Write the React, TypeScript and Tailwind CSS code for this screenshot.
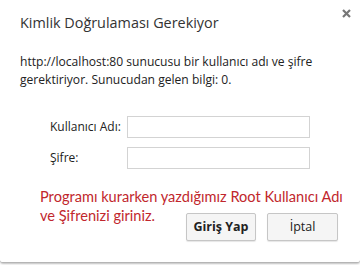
import React from 'react';

const font = { fontFamily: '"Open Sans", "Noto Sans", sans-serif' };
const noteFont = { fontFamily: 'Lato, "Open Sans", sans-serif' };

export default function App() {
  return (
    <div className="w-[360px] h-[265px] bg-white overflow-hidden" style={font}>
      <div className="h-[263px] bg-white border-b border-[#b5b5b5] rounded-b-[3px] shadow-[0_1px_2px_rgba(0,0,0,0.25)] flex flex-col text-[#222]">
        {/* --- HEADER --- */}
        <div className="flex items-start justify-between pl-5 pr-[7px] pt-[12px]">
          <h1 className="text-[14.4px] leading-[22px] text-[#333]">Kimlik Doğrulaması Gerekiyor</h1>
          <button className="mt-[-6px] w-[14px] h-[14px] flex items-center justify-center text-[#777]">
            <svg width="9" height="9" viewBox="0 0 9 9">
              <path d="M1 1 L8 8 M8 1 L1 8" stroke="currentColor" strokeWidth="2.2" strokeLinecap="butt" />
            </svg>
          </button>
        </div>

        {/* --- MESSAGE --- */}
        <p className="mt-[19px] pl-5 pr-4 text-[12.1px] leading-[18px] text-[#222]">
          http://localhost:80 sunucusu bir kullanıcı adı ve şifre<br />gerektiriyor. Sunucudan gelen bilgi: 0.
        </p>

        {/* --- FORM --- */}
        <div className="mt-[27px] ml-[50px] grid grid-cols-[77px_183px] gap-y-[9px] items-center">
          <label className="text-[12px] text-[#222]">Kullanıcı Adı:</label>
          <input className="h-[22px] bg-white border border-[#d3d3d3] outline-none px-1 text-[12px]" />
          <label className="text-[12px] text-[#222]">Şifre:</label>
          <input type="password" className="h-[22px] bg-white border border-[#d3d3d3] outline-none px-1 text-[12px]" />
        </div>

        {/* --- FOOTER --- */}
        <div className="relative mt-[18px] pl-[40px] pr-[10px]">
          <p className="text-[14.6px] leading-[19px] text-[#c1272d] whitespace-nowrap" style={noteFont}>
            Programı kurarken yazdığımız Root Kullanıcı Adı<br />ve Şifrenizi giriniz.
          </p>
          <div className="absolute left-[186px] top-[26px] flex gap-[11px]">
            <button className="w-[70px] h-[28px] bg-[#f5f5f5] border border-[#c6c6c6] rounded-[2px] shadow-[0_1px_1px_rgba(0,0,0,0.1)] text-[12.5px] font-bold text-[#222]">
              Giriş Yap
            </button>
            <button className="w-[71px] h-[28px] bg-[#f5f5f5] border border-[#c6c6c6] rounded-[2px] shadow-[0_1px_1px_rgba(0,0,0,0.1)] text-[12.5px] text-[#222]">
              İptal
            </button>
          </div>
        </div>
      </div>
    </div>
  );
}
